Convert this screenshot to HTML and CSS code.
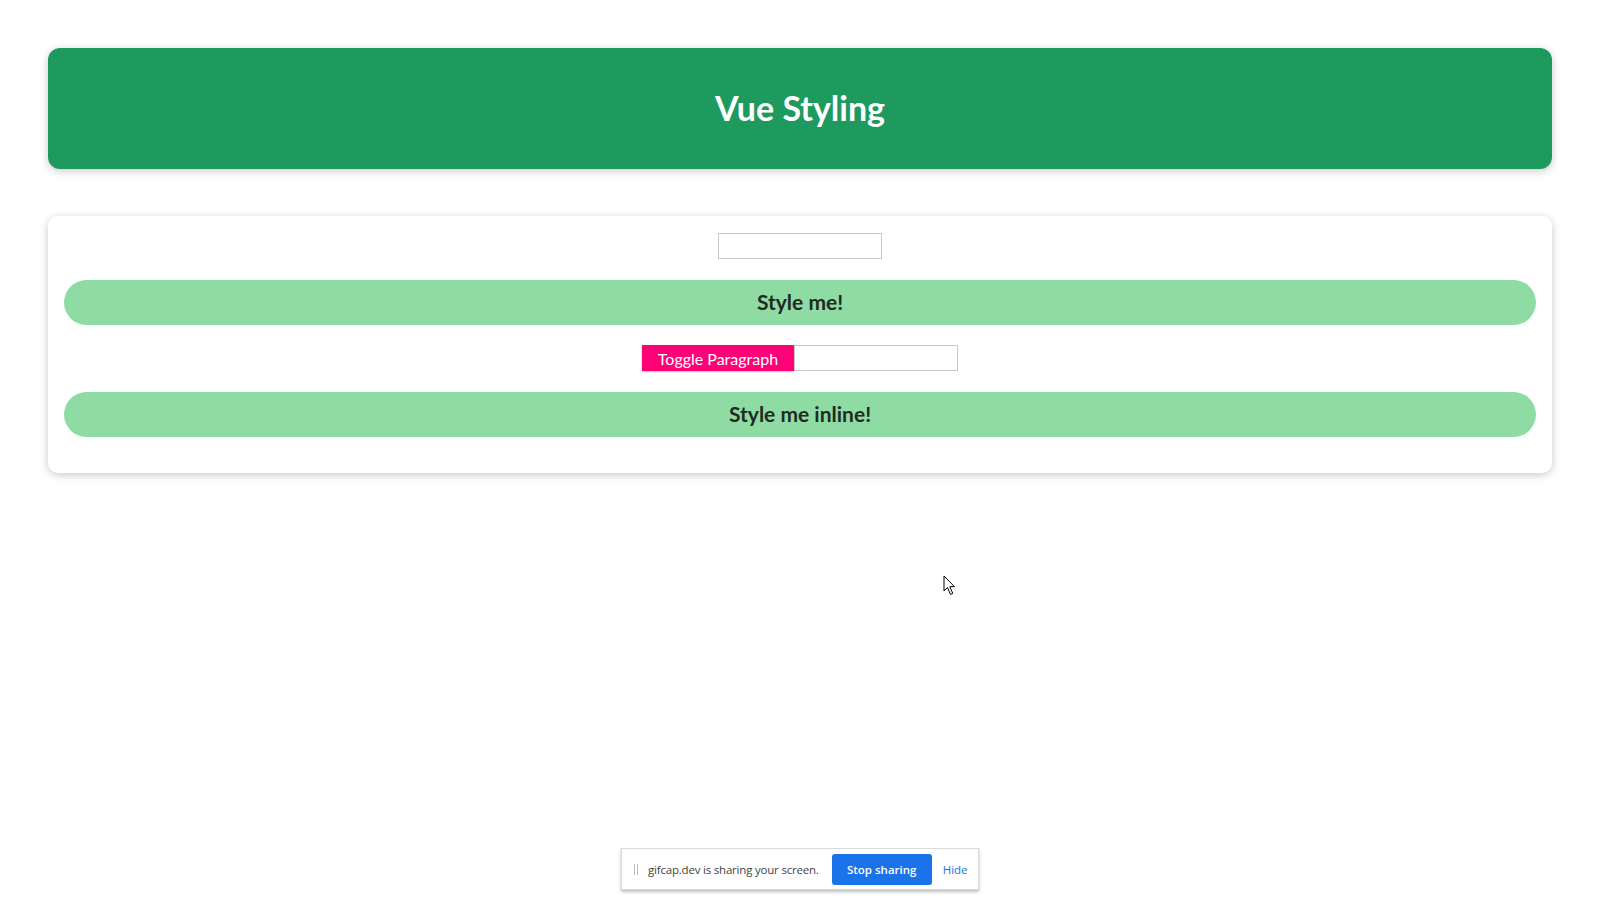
FILE: index.html
```html
<!DOCTYPE html>
<html lang="en">
<head>
<meta charset="utf-8">
<title>Vue Styling</title>
<link rel="stylesheet" href="styles.css">
</head>
<body>
<div class="page">
  <header class="header">
    <h1 class="title">Vue Styling</h1>
  </header>
  <section class="card">
    <input class="field" type="text">
    <div class="pill">Style me!</div>
    <div class="toggle-row">
      <button class="toggle">Toggle Paragraph</button>
      <input class="field" type="text">
    </div>
    <div class="pill">Style me inline!</div>
  </section>
</div>
<svg class="cursor" width="14" height="22" viewBox="0 0 14 22">
  <path d="M1 1 L1 16 L4.5 12.5 L7.5 19.5 L9.8 18.5 L6.8 11.7 L11.5 11.7 Z" fill="#fff" stroke="#000" stroke-width="1" stroke-linejoin="miter"/>
</svg>
<div class="sharebar">
  <span class="grip"></span>
  <span class="share-text">gifcap.dev is sharing your screen.</span>
  <span class="stop">Stop sharing</span>
  <span class="hide">Hide</span>
</div>
</body>
</html>
```

FILE: styles.css
```css
* { box-sizing: border-box; }
html, body { margin: 0; padding: 0; background: #fff; }
body {
  font-family: Lato, "Open Sans", sans-serif;
  color: #222;
  width: 1600px;
  height: 900px;
  position: relative;
  overflow: hidden;
}
.page {
  padding: 48px 48px 0;
  display: flex;
  flex-direction: column;
  gap: 47px;
}
.header {
  background: #1e9a5e;
  border-radius: 12px;
  height: 121px;
  display: flex;
  align-items: center;
  justify-content: center;
  box-shadow: 0 2px 8px rgba(0,0,0,0.22);
}
.title {
  margin: 0;
  color: #fff;
  font-size: 34px;
  font-weight: 700;
  padding-bottom: 3px;
}
.card {
  background: #fff;
  border-radius: 10px;
  box-shadow: 0 2px 8px rgba(0,0,0,0.22);
  padding: 17px 16px 36px;
  display: flex;
  flex-direction: column;
  align-items: center;
  height: 257px;
}
.field {
  width: 164px;
  height: 26px;
  border: 1px solid #c8c8c8;
  margin: 0;
  padding: 0 4px;
  font: inherit;
  background: #fff;
}
.pill {
  align-self: stretch;
  height: 45px;
  border-radius: 23px;
  background: #8edba4;
  display: flex;
  align-items: center;
  justify-content: center;
  font-size: 21px;
  font-weight: 700;
  color: #1f2a22;
  margin: 21px 0 20px;
  padding-bottom: 2px;
}
.toggle-row {
  display: flex;
  height: 26px;
}
.toggle {
  width: 152px;
  height: 26px;
  border: none;
  margin: 0;
  background: #ff0077;
  color: #fff;
  font-family: Lato, sans-serif;
  font-size: 16px;
  padding: 0;
  box-shadow: 0 1px 2px rgba(0,0,0,0.25);
}
.toggle-row .field { height: 26px; }
.toggle-row + .pill { margin-bottom: 0; }
.cursor {
  position: absolute;
  left: 943px;
  top: 575px;
}
.sharebar {
  position: absolute;
  left: 621px;
  top: 848px;
  width: 358px;
  height: 42px;
  background: #fff;
  border: 1px solid #dadada;
  box-shadow: 0 2px 3px rgba(0,0,0,0.25);
  display: flex;
  align-items: center;
  padding: 0 0 0 12px;
  font-family: "Open Sans", sans-serif;
  font-size: 11.5px;
}
.grip {
  width: 4px;
  height: 11px;
  border-left: 1px solid #bbb;
  border-right: 1px solid #bbb;
  margin-right: 10px;
}
.share-text { color: #444; letter-spacing: -0.2px; }
.stop {
  margin-left: 13px;
  width: 100px;
  height: 31px;
  border-radius: 3px;
  background: #1a73e8;
  color: #fff;
  font-weight: 600;
  display: flex;
  align-items: center;
  justify-content: center;
}
.hide {
  margin-left: 11px;
  color: #1a73e8;
}
```
